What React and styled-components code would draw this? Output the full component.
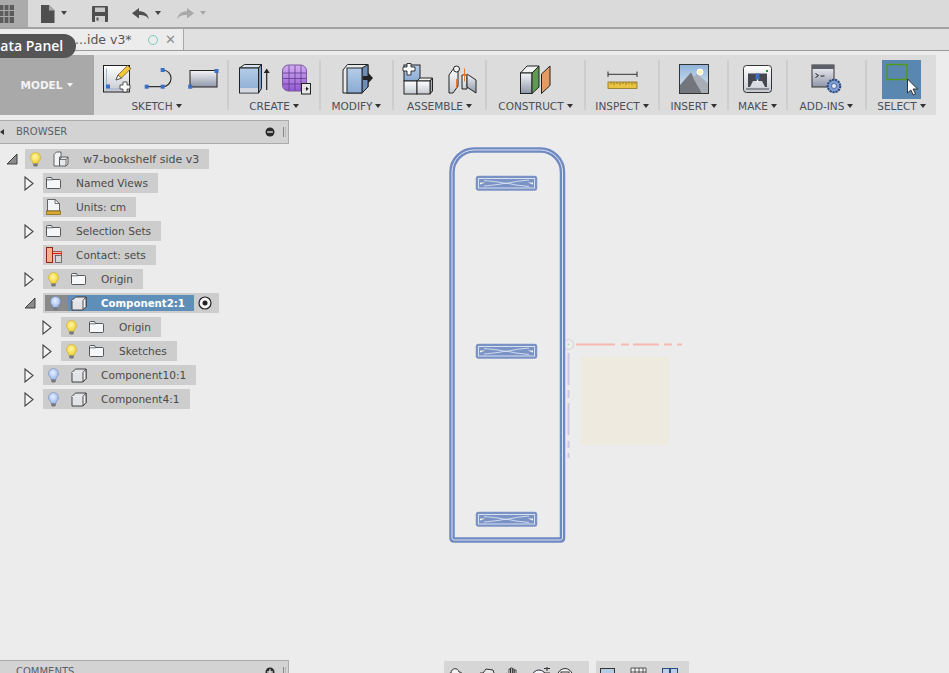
import styled, { createGlobalStyle } from "styled-components";

const GlobalStyle = createGlobalStyle`
  html, body {
    margin: 0;
    height: 673px;
    overflow: hidden;
    background: #ececec;
    font-family: "DejaVu Sans", "Open Sans", sans-serif;
  }
`;

/* shared gradients */
const Gradients = () => (
  <HiddenDefs>
    <defs>
      <linearGradient id="gWhite" x1="0" y1="0" x2="0" y2="1">
        <stop offset="0" stopColor="#ffffff" />
        <stop offset="1" stopColor="#c4c8d0" />
      </linearGradient>
      <linearGradient id="gSteel" x1="0" y1="0" x2="0" y2="1">
        <stop offset="0" stopColor="#f4f5f8" />
        <stop offset="1" stopColor="#8f96a8" />
      </linearGradient>
      <linearGradient id="gBlue" x1="0" y1="0" x2="0" y2="1">
        <stop offset="0" stopColor="#b4cde8" />
        <stop offset="1" stopColor="#8aaad2" />
      </linearGradient>
      <linearGradient id="gPurple" x1="0" y1="0" x2="0" y2="1">
        <stop offset="0" stopColor="#d2aef0" />
        <stop offset="1" stopColor="#9358d2" />
      </linearGradient>
      <linearGradient id="gSky" x1="0" y1="0" x2="0" y2="1">
        <stop offset="0" stopColor="#8fb3d8" />
        <stop offset="1" stopColor="#e4ecf3" />
      </linearGradient>
      <radialGradient id="gBulbOn" cx="0.45" cy="0.4" r="0.6">
        <stop offset="0" stopColor="#fff7a8" />
        <stop offset="1" stopColor="#f2cf2e" />
      </radialGradient>
      <radialGradient id="gBulbBlue" cx="0.45" cy="0.4" r="0.6">
        <stop offset="0" stopColor="#e8f0ff" />
        <stop offset="1" stopColor="#9db8ee" />
      </radialGradient>
    </defs>
  </HiddenDefs>
);

const GridIcon = () => (
  <svg width="14" height="18" viewBox="0 0 14 18">
    <path d="M0 0h14v18H0z" fill="#5c5c5c" />
    <path d="M4 0v18M9 0v18M0 5.500h14M0 11.500h14" stroke="#aaa" strokeWidth="1.200" />
  </svg>
);

const FileIcon = () => (
  <svg width="14" height="18" viewBox="0 0 14 18">
    <path d="M0 0h8l5.500 5.500V18H0z" fill="#4f4f4f" />
    <path d="M8 0v5.500h5.500z" fill="#a9a9a9" />
  </svg>
);

const SaveIcon = () => (
  <svg width="16" height="16" viewBox="0 0 16 16">
    <path d="M1 0h14a1 1 0 0 1 1 1v14a1 1 0 0 1-1 1H1a1 1 0 0 1-1-1V1a1 1 0 0 1 1-1z" fill="#4f4f4f" />
    <path d="M3 1.500h10v4.500H3z" fill="#c8c8c8" />
    <path d="M3 10h10v6H3z" fill="#d2d2d2" />
    <path d="M4.500 11.500h2v3h-2z" fill="#4f4f4f" />
  </svg>
);

const UndoIcon = ({ flip, color }) => (
  <svg width="17" height="12" viewBox="0 0 17 12" style={flip ? { transform: "scaleX(-1)" } : undefined}>
    <path d="M7 0v3.200c5 0 9 2.300 10 8.300-2-3.200-5-4.400-10-4.400V10.500L0 5.200z" fill={color} />
  </svg>
);

const SketchIcon = () => (
  <svg width="30" height="30" viewBox="0 0 30 30">
    <rect x="0.500" y="1.500" width="26" height="26.500" fill="url(#gWhite)" stroke="#222" />
    <path d="M3.500 4.500v20.500h20" fill="none" stroke="#9fb2cc" />
    <rect x="3" y="20.500" width="4" height="4" fill="#3a6fc4" />
    <path d="M13 16l2-5 9.500-9.500 3.500 3L18.500 14z" fill="#f3c63c" stroke="#5a4a1c" strokeWidth="0.700" />
    <path d="M13 16l2-5 3.500 3z" fill="#fff" stroke="#333" strokeWidth="0.700" />
    <path d="M20 18h4v3h3v4h-3v3h-4v-3h-3v-4h3z" fill="#fff" stroke="#333" strokeWidth="0.800" />
  </svg>
);

const ArcIcon = () => (
  <svg width="32" height="26" viewBox="0 0 32 26">
    <path d="M2.700 20.700H18.700A8.300 8.300 0 0 0 18.700 4" fill="none" stroke="#333" strokeWidth="1.200" />
    <rect x="0.700" y="18.700" width="4" height="4" fill="#3a6fc4" />
    <rect x="16.700" y="18.700" width="4" height="4" fill="#3a6fc4" />
    <rect x="16.700" y="2" width="4" height="4" fill="#3a6fc4" />
  </svg>
);

const RectIcon = () => (
  <svg width="32" height="26" viewBox="0 0 32 26">
    <rect x="3" y="4.500" width="27" height="16.500" fill="url(#gSteel)" stroke="#222" />
    <rect x="1.200" y="18.700" width="4" height="4" fill="#3a6fc4" />
    <rect x="27.500" y="3" width="4" height="4" fill="#3a6fc4" />
  </svg>
);

const ExtrudeIcon = () => (
  <svg width="34" height="32" viewBox="0 0 34 32">
    <path d="M1.500 5L6.500 1.500H23.500L20.500 5z" fill="#d8e4f2" stroke="#222" />
    <path d="M20.500 5L23.500 1.500V25.500L20.500 30z" fill="#7f9cc2" stroke="#222" />
    <rect x="1.500" y="5" width="19" height="25" fill="url(#gBlue)" stroke="#222" />
    <rect x="2" y="25" width="18" height="4.500" fill="#d4d8de" />
    <path d="M28.700 27V8" stroke="#222" strokeWidth="1.200" />
    <path d="M25.700 10l3-4.500 3 4.500z" fill="#222" />
  </svg>
);

const FormIcon = () => (
  <svg width="30" height="32" viewBox="0 0 30 32">
    <rect x="1.500" y="2" width="24" height="26" rx="6" fill="url(#gPurple)" stroke="#7a55a0" />
    <path d="M2 10h23M2 15.500h23M2 21h23M8 2.500v25M14 2.500v25M20 2.500v25" stroke="#5e3a8e" strokeWidth="0.800" />
    <rect x="20.500" y="20.500" width="9" height="10.500" fill="#e6e6e6" stroke="#222" />
    <path d="M22 25.700h3v-2l2.800 2-2.800 2.300v-2z" fill="#222" />
  </svg>
);

const PressPullIcon = () => (
  <svg width="34" height="32" viewBox="0 0 34 32">
    <path d="M3 30L3 7 7.500 1.500H28V24L22 30z" fill="#e8eaee" stroke="#222" />
    <path d="M22 5L28 1.500V24L22 30z" fill="#6f8db6" stroke="#222" />
    <rect x="7" y="5" width="15" height="25" fill="url(#gBlue)" stroke="#222" />
    <path d="M23 13h5V9.500l5 5.500-5 5.500V17h-5z" fill="#222" />
  </svg>
);

const AssembleIcon = () => (
  <svg width="32" height="32" viewBox="0 0 32 32">
    <rect x="2" y="2" width="16" height="16" fill="url(#gBlue)" stroke="#222" />
    <rect x="2" y="18" width="13" height="13" fill="url(#gWhite)" stroke="#222" />
    <path d="M15 18l3-3h12.500l-2.500 3z" fill="#f2f2f2" stroke="#222" />
    <path d="M28 18l2.500-3v13L28 31z" fill="#a9aeb8" stroke="#222" />
    <rect x="15" y="18" width="13" height="13" fill="url(#gWhite)" stroke="#222" />
    <path d="M5 0.500h4v3.500h4v4H9v4H5V8H1V4h4z" fill="#fff" stroke="#222" strokeWidth="0.900" />
  </svg>
);

const JointIcon = () => (
  <svg width="30" height="32" viewBox="0 0 30 32">
    <path d="M1 12L6 5h4v18l-5 7H1z" fill="url(#gWhite)" stroke="#222" />
    <circle cx="8.500" cy="6" r="3" fill="#f4f4f4" stroke="#222" />
    <path d="M14 12v14h5V12z" fill="url(#gWhite)" stroke="#222" />
    <path d="M19 11l9 6v13l-9-6z" fill="url(#gSteel)" stroke="#222" />
    <path d="M16.500 5.500v13M8.500 16v9M14 12h6" stroke="#e8792c" strokeWidth="1" />
  </svg>
);

const ConstructIcon = () => (
  <svg width="34" height="32" viewBox="0 0 34 32">
    <path d="M1.500 10L8 3h12l-7 7z" fill="#f0f2f4" stroke="#222" />
    <rect x="1.500" y="10" width="11.500" height="20.500" fill="url(#gSteel)" stroke="#222" />
    <path d="M13 10l7-7v21l-7 6.500z" fill="#5e9a50" stroke="#222" />
    <path d="M22.500 30.500V11L31 3v19.500z" fill="#e59a62" stroke="#222" />
  </svg>
);

const RulerIcon = () => (
  <svg width="32" height="24" viewBox="0 0 32 24">
    <path d="M2 7.300h29M2 4.500v5.500M31 4.500v5.500" stroke="#333" fill="none" />
    <rect x="2" y="15" width="29" height="6.500" fill="#e8c240" stroke="#8a7428" strokeWidth="0.800" />
    <path d="M5 15v2M8 15v3M11 15v2M14 15v3M17 15v2M20 15v3M23 15v2M26 15v3M29 15v2" stroke="#7a6420" strokeWidth="0.700" />
  </svg>
);

const PictureIcon = () => (
  <svg width="32" height="32" viewBox="0 0 32 32">
    <rect x="1.500" y="1.500" width="29" height="29" fill="url(#gSky)" stroke="#333" />
    <circle cx="22" cy="9" r="3" fill="#fff4b8" stroke="#fff" />
    <path d="M2 30V22L13 9.500 24 30z" fill="#73767d" />
    <path d="M15 15l4-4 11 9v10H24z" fill="#a9aeb6" />
  </svg>
);

const PrinterIcon = () => (
  <svg width="32" height="30" viewBox="0 0 32 30">
    <rect x="1.500" y="1.500" width="28" height="27" rx="3" fill="url(#gWhite)" stroke="#333" />
    <rect x="6" y="9.500" width="19" height="13.500" fill="#45484e" />
    <path d="M8 23l3-6h9l3 6z" fill="#d8dbe0" />
    <rect x="13.500" y="9.500" width="4" height="6" fill="#3a6fc4" />
    <path d="M15.500 15.500v3" stroke="#fff" strokeWidth="1.400" />
    <rect x="24" y="6" width="2" height="2" fill="#1a9a2a" />
    <rect x="4" y="24" width="23" height="2" fill="#8a8d94" />
  </svg>
);

const AddinsIcon = () => (
  <svg width="32" height="30" viewBox="0 0 32 30">
    <rect x="1" y="1" width="22" height="22" fill="url(#gSteel)" stroke="#333" />
    <rect x="1" y="1" width="22" height="4" fill="#5d6068" />
    <path d="M4.500 9.500l3 2-3 2M9.500 12h4" fill="none" stroke="#222" />
    <circle cx="23" cy="22" r="6.300" fill="#7d9fd6" stroke="#2d4a80" strokeDasharray="2.200 0.800" strokeWidth="2" />
    <circle cx="23" cy="22" r="2.500" fill="#e6ecf6" stroke="#2d4a80" strokeWidth="0.700" />
  </svg>
);

const SelectIcon = () => (
  <svg width="39" height="39" viewBox="0 0 39 39">
    <rect x="5" y="4.500" width="20" height="15" fill="none" stroke="#4f9a1e" strokeWidth="1.500" />
    <path d="M25.500 19v14l3.300-3 2.500 5 2.200-1-2.400-5h4.400z" fill="#fff" stroke="#222" strokeWidth="0.900" />
  </svg>
);

const Bulb = ({ blue }) => (
  <svg width="11" height="15" viewBox="0 0 11 15">
    <path d="M5.500 0.500a5 5 0 0 1 3 9l-.5 2H3l-.5-2a5 5 0 0 1 3-9z" fill={blue ? "url(#gBulbBlue)" : "url(#gBulbOn)"} stroke={blue ? "#6f88b8" : "#c9a820"} strokeWidth="0.600" />
    <path d="M3.200 11.500h4.600v2l-1 1H4.200l-1-1z" fill="#77797e" />
  </svg>
);

const FolderIcon = () => (
  <svg width="15" height="12" viewBox="0 0 15 12">
    <path d="M0.500 1.500a1 1 0 0 1 1-1h4l1 2h7a1 1 0 0 1 1 1v7a1 1 0 0 1-1 1h-12a1 1 0 0 1-1-1z" fill="#f6f7f9" stroke="#333" strokeWidth="0.800" />
    <path d="M0.500 2.800h6" stroke="#333" strokeWidth="0.700" />
  </svg>
);

const CubeIcon = () => (
  <svg width="16" height="15" viewBox="0 0 16 15">
    <path d="M1 4.500L4.500 1H15v9.500L12 14H1z" fill="#e2e4e8" stroke="#333" strokeWidth="0.900" />
    <path d="M1 4.500h11V14M12 4.500L15 1" fill="none" stroke="#eee" strokeWidth="0.800" />
    <path d="M12 4.500V14L15 10.500V1z" fill="#f6f6f6" stroke="#333" strokeWidth="0.900" />
  </svg>
);

const AssemblyIcon = () => (
  <svg width="16" height="16" viewBox="0 0 16 16">
    <path d="M1 3.500L3.500 1H8v5H6.500v9H1z" fill="#f2f3f5" stroke="#444" strokeWidth="0.800" />
    <path d="M6.500 8.500L9 6h6v7l-2 2H6.500z" fill="#e6e7ea" stroke="#444" strokeWidth="0.800" />
    <path d="M6.500 8.500H13V15M13 8.500L15 6" fill="none" stroke="#444" strokeWidth="0.700" />
  </svg>
);

const UnitsIcon = () => (
  <svg width="15" height="16" viewBox="0 0 15 16">
    <path d="M1.500 0.500H9L13.500 4.500V12h-12z" fill="#f4f5f7" stroke="#444" strokeWidth="0.800" />
    <path d="M9 0.500v4h4.500" fill="none" stroke="#444" strokeWidth="0.700" />
    <rect x="0.500" y="12" width="14" height="3.500" fill="#dca92c" stroke="#7a5a14" strokeWidth="0.700" />
  </svg>
);

const ContactIcon = () => (
  <svg width="16" height="16" viewBox="0 0 16 16">
    <rect x="0.500" y="0.500" width="6" height="15" fill="#f6b08e" stroke="#8a2c14" />
    <rect x="9.500" y="8.500" width="6" height="7" fill="#d6d6d6" stroke="#555" strokeWidth="0.800" />
    <path d="M6.500 4.500h9v4" fill="#f4c4b2" stroke="#8a4030" strokeWidth="0.800" />
    <path d="M6.500 6.500h9" stroke="#f01818" strokeWidth="1.200" />
  </svg>
);

const TriRight = () => (
  <svg width="10" height="15" viewBox="0 0 10 15">
    <path d="M1 1l8 6.500-8 6.500z" fill="#f4f4f4" stroke="#444" strokeWidth="1.100" />
  </svg>
);

const TriDown = () => (
  <svg width="12" height="12" viewBox="0 0 12 12">
    <path d="M11 1v10H1z" fill="#8b8b8b" stroke="#333" strokeWidth="0.900" />
  </svg>
);

const RadioIcon = () => (
  <svg width="14" height="14" viewBox="0 0 14 14">
    <circle cx="7" cy="7" r="6" fill="#f4f4f4" stroke="#222" strokeWidth="1.200" />
    <circle cx="7" cy="7" r="2.500" fill="#222" />
  </svg>
);

const MinusDot = () => (
  <svg width="10" height="10" viewBox="0 0 10 10">
    <circle cx="5" cy="5" r="4.500" fill="#2c2c2c" />
    <path d="M2.200 5h5.600" stroke="#ddd" strokeWidth="1.400" />
  </svg>
);

const PlusDot = () => (
  <svg width="10" height="10" viewBox="0 0 10 10">
    <circle cx="5" cy="5" r="4.500" fill="#2c2c2c" />
    <path d="M2.200 5h5.600M5 2.200v5.600" stroke="#ddd" strokeWidth="1.400" />
  </svg>
);

const Slot = ({ y }) => (
  <g transform={`translate(476 ${y})`}>
    <rect x="0.500" y="0.500" width="60" height="13.500" rx="2" fill="#7b93c4" stroke="#7b93c4" strokeWidth="1.500" />
    <rect x="2.500" y="2.500" width="56" height="9.500" fill="#7b93c4" stroke="#d6e0f4" />
    <path d="M8 4.500l14 1.500 8 1.500 10-2 13-1.500M8 10l14-1.500 8-1.500 10 2 13 1.500" fill="none" stroke="#d6e0f4" strokeWidth="0.900" />
    <path d="M4 6.500h5.500L4 8.500z" fill="#f2f0e8" />
    <path d="M57 6.500h-5.500L57 8.500z" fill="#f2f0e8" />
  </g>
);

const Drawing = () => (
  <CanvasSvg viewBox="289 115 660 558">
    <rect x="581" y="357" width="88" height="88" fill="#efeadf" />
    <path d="M576 344.500H615M621 344.500H629M633 344.500H659M664 344.500H672M677 344.500H682" stroke="#f6b9ae" strokeWidth="2" fill="none" />
    <path d="M568.500 353V385M568.500 390V398M568.500 403V435M568.500 441V448M568.500 453V458" stroke="#cdc6e6" strokeWidth="2" fill="none" />
    <circle cx="568.500" cy="344.500" r="5" fill="#eeeeee" stroke="#dadada" strokeWidth="1.500" />
    <circle cx="568.500" cy="344.500" r="1" fill="#a8e0a0" />
    <path d="M452 538V172A22 22 0 0 1 474 150H540.500A22 22 0 0 1 562.500 172V538Q562.500 540 560.500 540H454Q452 540 452 538Z" fill="none" stroke="#7089c0" strokeWidth="5.500" />
    <path d="M452 538V172A22 22 0 0 1 474 150H540.500A22 22 0 0 1 562.500 172V538Q562.500 540 560.500 540H454Q452 540 452 538Z" fill="none" stroke="#dbe4f5" strokeWidth="1" />
    <Slot y={176} />
    <Slot y={344} />
    <Slot y={512} />
  </CanvasSvg>
);

const NavLeft = () => (
  <svg width="145" height="12" viewBox="0 0 145 12">
    <path d="M3 12c0-4 2-6 4-6 0-5 7-6 8-1 3 0 5 3 5 7" fill="#f2f2f2" stroke="#333" />
    <path d="M24 7h6l-3 3z" fill="#333" />
    <path d="M36 12V6h3l3-4 7 1 1 3 2 6" fill="#e8e8e8" stroke="#333" />
    <path d="M63 12c-1-3-2-5-1-6l3 2V2h1.500v5-6h1.800v6-5h1.800v5-4H72v8l1 2" fill="#f2f2f2" stroke="#333" strokeWidth="0.900" />
    <circle cx="95" cy="10" r="7" fill="#f0f4fa" stroke="#333" />
    <path d="M100 1.500h6M103 -1v5M100 6h6" stroke="#333" />
    <circle cx="121" cy="9" r="7.500" fill="#f2f2f2" stroke="#333" />
    <rect x="117" y="5" width="8" height="8" fill="#eee" stroke="#333" />
    <path d="M135 8h6l-3 3z" fill="#333" />
  </svg>
);

const NavRight = () => (
  <svg width="93" height="12" viewBox="0 0 93 12">
    <rect x="4.500" y="1.500" width="14" height="12" fill="#b6cbe6" stroke="#333" />
    <path d="M23 8h6l-3 3z" fill="#333" />
    <path d="M35 1h15v12H35zM35 5h15M35 9h15M39 1v12M43 1v12M47 1v12" fill="#f2f2f2" stroke="#333" strokeWidth="0.800" />
    <path d="M55 8h6l-3 3z" fill="#333" />
    <rect x="66.500" y="1.500" width="7" height="8" fill="#bcd0ea" stroke="#2d4a80" />
    <rect x="74.500" y="1.500" width="7" height="8" fill="#bcd0ea" stroke="#2d4a80" />
    <path d="M85 8h6l-3 3z" fill="#333" />
  </svg>
);

const toolGroups = [
  { label: "SKETCH", width: 133, gap: 11, nudge: 8, icons: [<SketchIcon key="a" />, <ArcIcon key="b" />, <RectIcon key="c" />] },
  { label: "CREATE", width: 90, gap: 9, icons: [<ExtrudeIcon key="a" />, <FormIcon key="b" />] },
  { label: "MODIFY", width: 71, gap: 0, icons: [<PressPullIcon key="a" />] },
  { label: "ASSEMBLE", width: 91, gap: 14, icons: [<AssembleIcon key="a" />, <JointIcon key="b" />] },
  { label: "CONSTRUCT", width: 97, gap: 0, icons: [<ConstructIcon key="a" />] },
  { label: "INSPECT", width: 72, gap: 0, icons: [<RulerIcon key="a" />] },
  { label: "INSERT", width: 67, gap: 0, icons: [<PictureIcon key="a" />] },
  { label: "MAKE", width: 57, gap: 0, icons: [<PrinterIcon key="a" />] },
  { label: "ADD-INS", width: 77, gap: 0, icons: [<AddinsIcon key="a" />] },
];

const treeRows = [
  { depth: 0, open: true, name: "w7-bookshelf side v3", bulb: "on", icon: <AssemblyIcon />, wide: true },
  { depth: 1, closed: true, name: "Named Views", icon: <FolderIcon /> },
  { depth: 1, name: "Units: cm", icon: <UnitsIcon /> },
  { depth: 1, closed: true, name: "Selection Sets", icon: <FolderIcon /> },
  { depth: 1, name: "Contact: sets", icon: <ContactIcon /> },
  { depth: 1, closed: true, name: "Origin", bulb: "on", icon: <FolderIcon /> },
  { depth: 1, open: true, name: "Component2:1", active: true },
  { depth: 2, closed: true, name: "Origin", bulb: "on", icon: <FolderIcon /> },
  { depth: 2, closed: true, name: "Sketches", bulb: "on", icon: <FolderIcon /> },
  { depth: 1, closed: true, name: "Component10:1", bulb: "blue", icon: <CubeIcon /> },
  { depth: 1, closed: true, name: "Component4:1", bulb: "blue", icon: <CubeIcon /> },
];

const App = () => {
  return (
    <Page>
      <GlobalStyle />
      <Gradients />

      <TopBar>
        <GridButton>
          <GridIcon />
        </GridButton>
        <TopTool $left={13}>
          <FileIcon />
          <Caret $color="#444" $left={6} />
        </TopTool>
        <TopTool $left={25}>
          <SaveIcon />
        </TopTool>
        <TopTool $left={24}>
          <UndoIcon color="#4f4f4f" />
          <Caret $color="#444" $left={6} />
        </TopTool>
        <TopTool $left={16}>
          <UndoIcon flip color="#a9a9a9" />
          <Caret $color="#a9a9a9" $left={6} />
        </TopTool>
      </TopBar>

      <TabRow>
        <Tab>
          <TabTitle>...ide v3*</TabTitle>
          <TabStatus />
          <TabClose>✕</TabClose>
        </Tab>
      </TabRow>
      <DataTip>Data Panel</DataTip>

      <Toolbar>
        <ModelButton>
          MODEL
          <Caret $color="#f4f4f4" $left={5} />
        </ModelButton>
        {toolGroups.map((group, i) => (
          <ToolGroupWrap key={group.label}>
            {i > 0 && <Divider />}
            <ToolGroup $width={group.width}>
              <ToolIcons $gap={group.gap}>{group.icons}</ToolIcons>
              <ToolLabel $nudge={group.nudge}>
                {group.label}
                <Caret $color="#333" $left={3} />
              </ToolLabel>
            </ToolGroup>
          </ToolGroupWrap>
        ))}
        <Divider />
        <ToolGroup $width={69}>
          <ToolIcons>
            <SelectButton>
              <SelectIcon />
            </SelectButton>
          </ToolIcons>
          <ToolLabel>
            SELECT
            <Caret $color="#333" $left={3} />
          </ToolLabel>
        </ToolGroup>
      </Toolbar>

      <Workspace>
        <SideColumn>
          <PanelHeader>
            <PanelArrow />
            <PanelTitle>BROWSER</PanelTitle>
            <MinusDot />
            <Grip />
          </PanelHeader>
          <Tree>
            {treeRows.map((row, i) => (
              <TreeRow key={i} $depth={row.depth}>
                <Expander>
                  {row.open && <TriDown />}
                  {row.closed && <TriRight />}
                </Expander>
                {row.active ? (
                  <Chip $active>
                    <BulbZone>
                      <Bulb blue />
                    </BulbZone>
                    <SelectedZone>
                      <IconSlot>
                        <CubeIcon />
                      </IconSlot>
                      <ActiveName>{row.name}</ActiveName>
                    </SelectedZone>
                    <RadioSlot>
                      <RadioIcon />
                    </RadioSlot>
                  </Chip>
                ) : (
                  <Chip>
                    {row.bulb && (
                      <BulbSlot>
                        <Bulb blue={row.bulb === "blue"} />
                      </BulbSlot>
                    )}
                    <IconSlot>{row.icon}</IconSlot>
                    <RowName $wide={row.wide}>{row.name}</RowName>
                  </Chip>
                )}
              </TreeRow>
            ))}
          </Tree>
          <CommentsHeader>
            <PanelTitle>COMMENTS</PanelTitle>
            <PlusDot />
            <Grip />
          </CommentsHeader>
        </SideColumn>

        <Canvas>
          <Drawing />
          <NavBar>
            <NavGroup $width={145}>
              <NavLeft />
            </NavGroup>
            <NavGroup $width={93}>
              <NavRight />
            </NavGroup>
          </NavBar>
        </Canvas>
      </Workspace>
    </Page>
  );
};

export default App;

const Page = styled.div`
  position: relative;
  height: 684px;
  display: flex;
  flex-direction: column;
  background: #ececec;
  overflow: hidden;
`;

const HiddenDefs = styled.svg`
  position: absolute;
  width: 0;
  height: 0;
`;

const TopBar = styled.div`
  display: flex;
  align-items: center;
  height: 27px;
  background: #dadada;
  border-bottom: 2px solid #a2a2a2;
  flex-shrink: 0;
`;

const GridButton = styled.div`
  width: 28px;
  height: 27px;
  background: #ababab;
  display: flex;
  align-items: center;
`;

const TopTool = styled.div`
  display: flex;
  align-items: center;
  margin-left: ${(p) => p.$left}px;
`;

const Caret = styled.span`
  display: inline-block;
  width: 0;
  height: 0;
  margin-left: ${(p) => p.$left}px;
  border-left: 3px solid transparent;
  border-right: 3px solid transparent;
  border-top: 4px solid ${(p) => p.$color};
  vertical-align: middle;
  position: relative;
  top: -1px;
`;

const TabRow = styled.div`
  height: 21px;
  display: flex;
  background: #e0e0e0;
  border-bottom: 1px solid #9a9a9a;
  flex-shrink: 0;
`;

const Tab = styled.div`
  width: 184px;
  display: flex;
  align-items: center;
  padding-left: 75px;
  box-sizing: border-box;
  background: #ececec;
  border-right: 1px solid #a8a8a8;
`;

const TabTitle = styled.span`
  font-size: 12.500px;
  color: #555;
  width: 73px;
  white-space: nowrap;
`;

const TabStatus = styled.span`
  width: 10px;
  height: 10px;
  box-sizing: border-box;
  border: 1.500px solid #7cc9b8;
  border-radius: 50%;
`;

const TabClose = styled.span`
  margin-left: 7px;
  font-size: 13px;
  font-weight: 700;
  color: #8c8c8c;
`;

const DataTip = styled.div`
  position: absolute;
  top: 34px;
  left: -12px;
  height: 24px;
  width: 88px;
  box-sizing: border-box;
  padding-left: 2px;
  line-height: 24px;
  font-family: "Open Sans", sans-serif;
  font-size: 14px;
  font-weight: 600;
  white-space: nowrap;
  color: #fff;
  background: #555;
  border-radius: 12px;
  z-index: 5;
`;

const Toolbar = styled.div`
  display: flex;
  align-items: center;
  width: 936px;
  height: 60px;
  margin-top: 4px;
  background: #dcdcdc;
  flex-shrink: 0;
`;

const ModelButton = styled.div`
  width: 94px;
  height: 60px;
  background: #a9a9a9;
  color: #f4f4f4;
  font-size: 10.500px;
  font-weight: 700;
  line-height: 60px;
  text-align: center;
`;

const ToolGroupWrap = styled.div`
  display: flex;
  align-items: center;
`;

const Divider = styled.div`
  width: 2px;
  height: 50px;
  background: #cdcdcd;
`;

const ToolGroup = styled.div`
  width: ${(p) => p.$width}px;
  height: 60px;
  padding-top: 4px;
  box-sizing: border-box;
  display: flex;
  flex-direction: column;
  align-items: center;
`;

const ToolIcons = styled.div`
  height: 40px;
  display: flex;
  align-items: center;
  gap: ${(p) => p.$gap || 0}px;
`;

const ToolLabel = styled.div`
  font-size: 10.500px;
  line-height: 14px;
  color: #4a4f58;
  white-space: nowrap;
  margin-right: ${(p) => p.$nudge || 0}px;
`;

const SelectButton = styled.div`
  width: 39px;
  height: 39px;
  background: #5a87b0;
`;

const Workspace = styled.div`
  flex: 1;
  display: flex;
  min-height: 0;
`;

const SideColumn = styled.div`
  width: 289px;
  flex-shrink: 0;
  display: flex;
  flex-direction: column;
  padding-top: 5px;
  box-sizing: border-box;
`;

const PanelHeader = styled.div`
  height: 24px;
  box-sizing: border-box;
  display: flex;
  align-items: center;
  background: #d3d3d3;
  border: 1px solid #ababab;
  border-left: none;
  padding: 0 0 1px 16px;
  position: relative;
`;

const CommentsHeader = styled(PanelHeader)`
  margin-top: auto;
`;

const PanelArrow = styled.span`
  position: absolute;
  left: 0;
  top: 8px;
  border-top: 3px solid transparent;
  border-bottom: 3px solid transparent;
  border-right: 4px solid #333;
`;

const PanelTitle = styled.span`
  flex: 1;
  font-size: 10px;
  color: #5c6068;
`;

const Grip = styled.span`
  width: 1px;
  height: 10px;
  margin: 0 2px 0 8px;
  border-left: 1px solid #888;
  border-right: 1px solid #bbb;
`;

const Tree = styled.div`
  padding-top: 3px;
`;

const TreeRow = styled.div`
  display: flex;
  align-items: center;
  height: 24px;
  padding-left: ${(p) => 6 + p.$depth * 18}px;
`;

const Expander = styled.div`
  width: 19px;
  flex-shrink: 0;
  display: flex;
  align-items: center;
`;

const Chip = styled.div`
  display: flex;
  align-items: center;
  height: 20px;
  background: #cdcdcd;
  padding: ${(p) => (p.$active ? "0 7px 0 2px" : "0 10px 0 3px")};
`;

const BulbSlot = styled.div`
  width: 25px;
  padding-left: 2px;
  box-sizing: border-box;
  display: flex;
  align-items: center;
`;

const BulbZone = styled.div`
  width: 23px;
  height: 16px;
  background: #8a8a8a;
  padding-left: 5px;
  box-sizing: border-box;
  display: flex;
  align-items: center;
`;

const SelectedZone = styled.div`
  width: 126px;
  height: 16px;
  background: #5f8fb8;
  padding-left: 3px;
  box-sizing: border-box;
  display: flex;
  align-items: center;
`;

const IconSlot = styled.div`
  width: 30px;
  flex-shrink: 0;
  display: flex;
  align-items: center;
`;

const RowName = styled.span`
  font-size: ${(p) => (p.$wide ? "11px" : "10.600px")};
  color: #4a4a4a;
  white-space: nowrap;
`;

const ActiveName = styled(RowName)`
  font-size: 10.200px;
  font-weight: 700;
  color: #fff;
`;

const RadioSlot = styled.div`
  margin-left: 4px;
  display: flex;
`;

const Canvas = styled.div`
  flex: 1;
  position: relative;
`;

const CanvasSvg = styled.svg`
  display: block;
  width: 660px;
  height: 558px;
`;

const NavBar = styled.div`
  position: absolute;
  left: 155px;
  top: 546px;
  display: flex;
  gap: 7px;
`;

const NavGroup = styled.div`
  width: ${(p) => p.$width}px;
  height: 24px;
  padding-top: 3px;
  box-sizing: border-box;
  background: #d6d6d6;
`;
